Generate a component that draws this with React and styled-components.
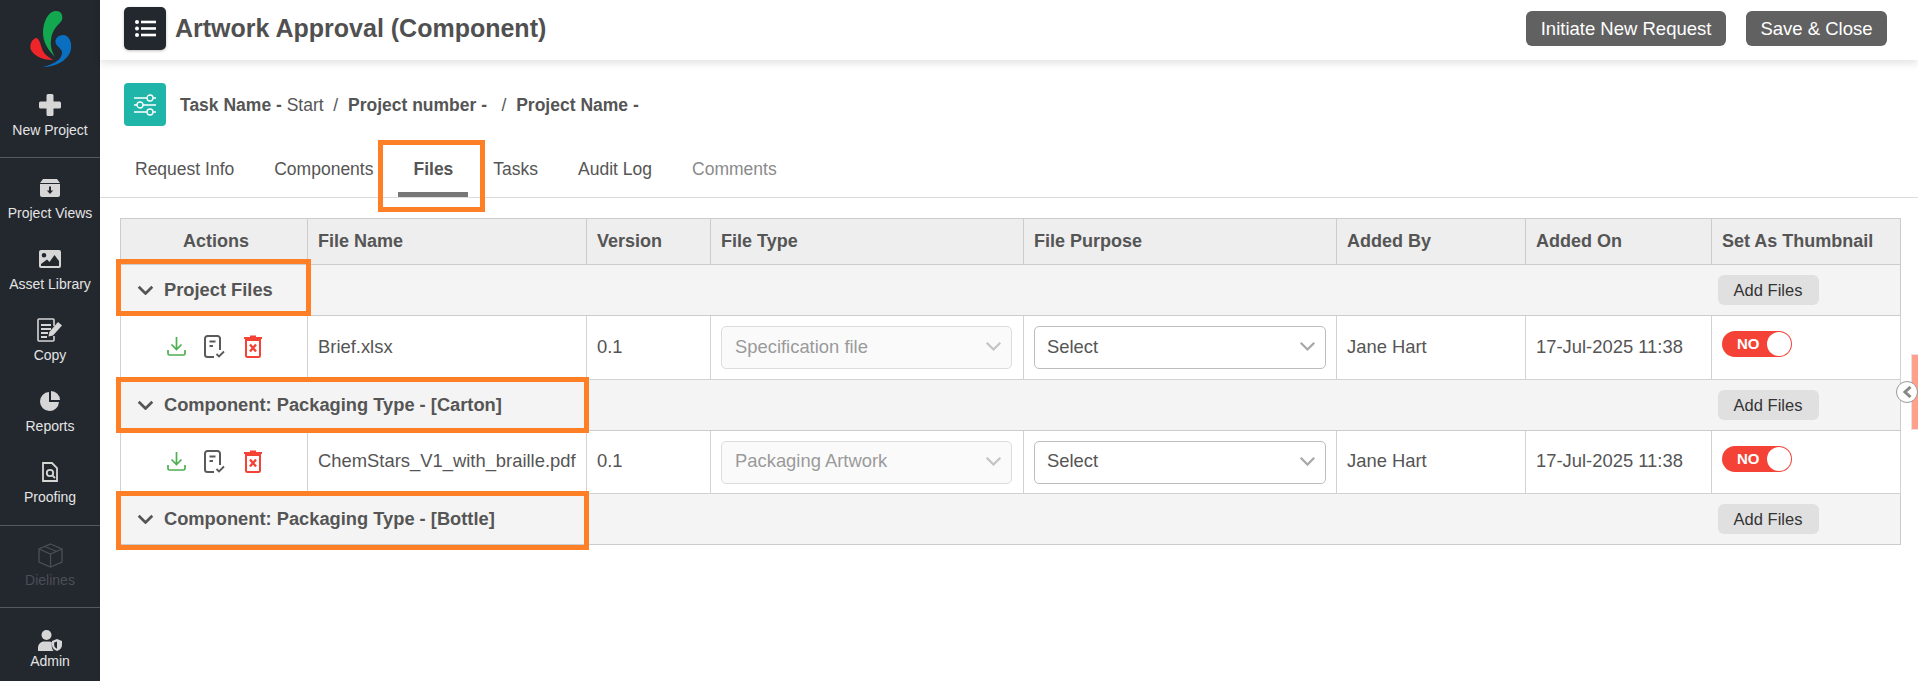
import React from 'react'
import styled, { createGlobalStyle } from 'styled-components'

const GlobalStyle = createGlobalStyle`
    html, body { margin: 0; padding: 0; background: #fff; overflow: hidden; }
    body { font-family: "Liberation Sans", Arial, sans-serif; color: #555; }
    * { box-sizing: border-box; }
`

const Page = styled.div`
    position: relative;
    display: flex;
    width: 1918px;
    height: 681px;
    overflow: hidden;
`

/* SIDEBAR */

const Sidebar = styled.nav`
    width: 100px;
    flex: none;
    background: #23272e;
    display: flex;
    flex-direction: column;
`

const LogoWrap = styled.div`
    height: 92px;
    svg { display: block; }
`

const NavSection = styled.div`
    display: flex;
    flex-direction: column;
    gap: 24px;
    padding: ${props => props.top}px 0 ${props => props.bottom}px;
    border-bottom: ${props => props.divider ? '1px solid #55585c' : 'none'};
`

const NavItem = styled.div`
    height: 47px;
    display: flex;
    flex-direction: column;
    align-items: center;
    color: ${props => props.dim ? '#4b4f55' : '#d6d6d6'};
`

const NavIcon = styled.div`
    height: 26px;
    display: flex;
    align-items: center;
    justify-content: center;
`

const NavLabel = styled.div`
    margin-top: ${props => props.tight ? 0 : 4}px;
    font-size: 14px;
    line-height: 17px;
    white-space: nowrap;
    color: ${props => props.dim ? '#4b4f55' : '#e4e4e4'};
`

/* MAIN */

const Main = styled.main`
    flex: 1;
    min-width: 0;
    display: flex;
    flex-direction: column;
`

const Topbar = styled.header`
    height: 60px;
    flex: none;
    display: flex;
    align-items: center;
    padding: 0 31px 3px 24px;
    background: #fff;
    box-shadow: 0 3px 8px rgba(0, 0, 0, 0.12);
`

const MenuButton = styled.div`
    width: 42px;
    height: 43px;
    border-radius: 5px;
    background: #23272e;
    display: flex;
    align-items: center;
    justify-content: center;
    box-shadow: 0 1px 3px rgba(0, 0, 0, 0.25);
`

const Title = styled.h1`
    margin: 0 0 0 9px;
    font-size: 25px;
    font-weight: 700;
    color: #505050;
`

const TopActions = styled.div`
    margin-left: auto;
    display: flex;
    gap: 20px;
`

const DarkButton = styled.button`
    height: 35px;
    padding: 0 14.5px;
    border: 0;
    border-radius: 6px;
    background: #616161;
    color: #fff;
    font-family: inherit;
    font-size: 18.5px;
`

const TaskBar = styled.div`
    display: flex;
    align-items: center;
    height: 43px;
    margin: 23px 0 0 24px;
`

const TaskIcon = styled.div`
    width: 42px;
    height: 43px;
    border-radius: 4px;
    background: #1fb5a9;
    display: flex;
    align-items: center;
    justify-content: center;
    margin-right: 14px;
`

const Crumb = styled.span`
    margin-top: 2px;
    font-size: 17.5px;
    color: #555;
    white-space: pre;
    font-weight: ${props => props.bold ? 700 : 400};
`

const Tabs = styled.div`
    display: flex;
    height: 49px;
    margin-top: 23px;
    padding-left: 15px;
    border-bottom: 1px solid #dcdcdc;
`

const Tab = styled.div`
    position: relative;
    padding: 0 20px;
    font-size: 17.5px;
    line-height: 40px;
    white-space: nowrap;
    font-weight: ${props => props.active ? 700 : 400};
    color: ${props => props.muted ? '#8a8a8a' : '#555'};
    ${props => props.active && `
        &::after {
            content: "";
            position: absolute;
            left: 50%;
            bottom: 0;
            width: 70px;
            height: 5px;
            margin-left: -35px;
            background: #777;
        }
    `}
`

const Grid = styled.table`
    width: 1780px;
    margin: 20px 0 0 20px;
    border-collapse: collapse;
    table-layout: fixed;
    font-size: 18.4px;
    color: #555;
`

const HeadCell = styled.th`
    height: 46px;
    padding: 0 10px 0 ${props => props.center ? 14 : 10}px;
    background: #eee;
    border: 1px solid #ccc;
    font-size: 18px;
    font-weight: 700;
    white-space: nowrap;
    text-align: ${props => props.center ? 'center' : 'left'};
`

const GroupCell = styled.td`
    height: 51px;
    padding: 0 ${props => props.action ? 6 : 10}px;
    background: #f4f4f4;
    border-top: 1px solid #ccc;
    border-bottom: 1px solid #ccc;
    ${props => props.action ? 'border-right' : 'border-left'}: 1px solid #ccc;
`

const GroupTitle = styled.div`
    display: flex;
    align-items: center;
    gap: 10px;
    padding-left: 6px;
    font-size: 18.3px;
    font-weight: 700;
    white-space: nowrap;
`

const SmallButton = styled.button`
    display: block;
    width: 101px;
    height: 30px;
    padding: 0;
    border: 0;
    border-radius: 6px;
    background: #e0e0e0;
    color: #333;
    font-family: inherit;
    font-size: 16.5px;
`

const Cell = styled.td`
    height: ${props => props.tall}px;
    padding: 0 10px 2px;
    border: 1px solid #d2d2d2;
    white-space: nowrap;
`

const ActionIcons = styled.div`
    display: flex;
    justify-content: center;
    align-items: center;
    gap: 18.5px;
`

const SelectBox = styled.div`
    display: flex;
    align-items: center;
    justify-content: space-between;
    width: ${props => props.wide}px;
    height: 43px;
    margin-top: 2px;
    padding: 0 9px 2px ${props => props.disabled ? 13 : 12}px;
    border-radius: 5px;
    border: 1px solid ${props => props.disabled ? '#dcdcdc' : '#bdbdbd'};
    background: ${props => props.disabled ? '#fafafa' : '#fff'};
    color: ${props => props.disabled ? '#9a9a9a' : '#555'};
`

const Toggle = styled.div`
    position: relative;
    width: 70px;
    height: 26px;
    margin-top: -5px;
    border-radius: 13px;
    background: #f44336;
    color: #fff;
    font-size: 15px;
    font-weight: 700;
    line-height: 26px;
    padding-left: 15px;
    &::after {
        content: "";
        position: absolute;
        top: 1px;
        right: 1px;
        width: 24px;
        height: 24px;
        border-radius: 50%;
        background: #fff;
    }
`

/* annotations and the collapse handle lie over the page */

const Marker = styled.div`
    position: absolute;
    left: ${props => props.x}px;
    top: ${props => props.y}px;
    width: ${props => props.w}px;
    height: ${props => props.h}px;
    border: 5px solid #ff7f27;
    pointer-events: none;
`

const SideTab = styled.div`
    position: absolute;
    right: 0;
    top: 354px;
    width: 7px;
    height: 76px;
    background: #ffa08c;
    border: 1px solid #e4e0de;
    border-right: 0;
`

const CollapseKnob = styled.div`
    position: absolute;
    left: 1896px;
    top: 381px;
    width: 22px;
    height: 22px;
    border-radius: 50%;
    background: #fff;
    border: 1px solid #999;
    display: flex;
    align-items: center;
    justify-content: center;
`

/* DRAWINGS */

const Logo = () => (
    <svg width="100" height="92" viewBox="0 0 100 92">
        <path fill="#12a84f" d="M55 11C62 10 63 16 62 20C60 24 52 28 51 40C50 46 52 52 55 57C48 50 43 42 43 33C43 22 48 12 55 11Z" />
        <path fill="#ee2529" d="M37 38C41 41 41 50 45 54C47 56 50 58 53 60C44 60 35 57 31 50C29 45 32 38 37 38Z" />
        <path fill="#0a6fc0" d="M63 35C69 35 72 42 71 49C69 60 56 67 43 67C50 65 60 62 62 54C63 50 59 48 56 44C54 39 58 35 63 35Z" />
    </svg>
)

const IconPlus = () => (
    <svg width="22" height="22" viewBox="0 0 22 22" fill="currentColor">
        <path d="M9 0h4a1.500 1.500 0 0 1 1.500 1.500V7.500h6A1.500 1.500 0 0 1 22 9v4a1.500 1.500 0 0 1-1.500 1.500h-6v6A1.500 1.500 0 0 1 13 22H9a1.500 1.500 0 0 1-1.500-1.500v-6h-6A1.500 1.500 0 0 1 0 13V9a1.500 1.500 0 0 1 1.500-1.500h6v-6A1.500 1.500 0 0 1 9 0Z" />
    </svg>
)

const IconViews = () => (
    <svg width="20" height="18" viewBox="0 0 20 18" fill="currentColor">
        <path d="M3 0h14l3 4H0Z" />
        <path fillRule="evenodd" d="M0 5h20v11a2 2 0 0 1-2 2H2a2 2 0 0 1-2-2ZM9 7.500v4H6.800l3.200 3.500 3.200-3.500H11v-4Z" />
    </svg>
)

const IconImage = () => (
    <svg width="22" height="18" viewBox="0 0 22 18" fill="currentColor">
        <path fillRule="evenodd" d="M2 0h18a2 2 0 0 1 2 2v14a2 2 0 0 1-2 2H2a2 2 0 0 1-2-2V2a2 2 0 0 1 2-2Zm3 3a2.300 2.300 0 1 0 0 4.600A2.300 2.300 0 0 0 5 3Zm-3 13h18v-5l-4.500-6-5 7-2.500-2.500L2 14Z" />
    </svg>
)

const IconCopy = () => (
    <svg width="26" height="24" viewBox="0 0 26 24" fill="none" stroke="currentColor">
        <path strokeWidth="1.600" d="M17 8V2a1 1 0 0 0-1-1H2a1 1 0 0 0-1 1v20a1 1 0 0 0 1 1h14a1 1 0 0 0 1-1v-4" />
        <path strokeWidth="2" d="M4 7h10M4 11h10M4 15h7M4 19h6" />
        <path fill="currentColor" stroke="none" d="M21 4l4 3.500-9 10-4.500 1 .8-4.600Z" />
    </svg>
)

const IconPie = () => (
    <svg width="20" height="20" viewBox="0 0 20 20" fill="currentColor">
        <path d="M9 1v10h10A9.500 9.500 0 1 1 9 1Z" />
        <path d="M11 0a9 9 0 0 1 9 9h-9Z" />
    </svg>
)

const IconProof = () => (
    <svg width="16" height="20" viewBox="0 0 16 20" fill="none" stroke="currentColor" strokeWidth="1.800">
        <path d="M1 1h9l5 5v13H1Z" />
        <circle cx="8" cy="11" r="3.200" />
        <path d="M10.300 13.300l2.700 2.700" />
    </svg>
)

const IconCube = () => (
    <svg width="25" height="25" viewBox="0 0 25 25" fill="none" stroke="currentColor" strokeWidth="1.300">
        <path d="M12.500 1L24 6v13l-11.500 5L1 19V6Z" />
        <path d="M1 6l11.500 5L24 6M12.500 11v13M7 3.500l11.500 5" />
    </svg>
)

const IconAdmin = () => (
    <svg width="24" height="21" viewBox="0 0 24 21" fill="currentColor">
        <circle cx="8.500" cy="5" r="5" />
        <path d="M0 21v-3c0-4 3-6.500 6-6.500h5c1 0 2 .2 2.800.6V16c0 2 .6 3.700 1.800 5Z" />
        <path fillRule="evenodd" d="M19 9l5 2v4c0 3-2 5-5 6-3-1-5-3-5-6v-4Zm0 2.500L16.200 12.600V15c0 1.800 1.200 3 2.800 3.700Z" />
    </svg>
)

const IconMenu = () => (
    <svg width="21" height="17" viewBox="0 0 21 17" fill="#fff">
        <circle cx="2" cy="2" r="2" /><circle cx="2" cy="8.500" r="2" /><circle cx="2" cy="15" r="2" />
        <rect x="6" y="0.700" width="15" height="2.600" /><rect x="6" y="7.200" width="15" height="2.600" /><rect x="6" y="13.700" width="15" height="2.600" />
    </svg>
)

const IconSliders = () => (
    <svg width="24" height="24" viewBox="0 0 24 24" fill="none" stroke="#fff" strokeWidth="1.300">
        <path d="M1 5h13M20 5h3M1 12h3M10 12h13M1 19h13M20 19h3" />
        <circle cx="17" cy="5" r="3" /><circle cx="7" cy="12" r="3" /><circle cx="17" cy="19" r="3" />
    </svg>
)

const Chevron = ({ size = 17, color = '#555', weight = 2.400 }) => (
    <svg width={size} height={size * 0.6} viewBox="0 0 15 9" fill="none" stroke={color} strokeWidth={weight}>
        <path d="M1.500 1.500L7.500 7.500L13.500 1.500" />
    </svg>
)

const IconBack = () => (
    <svg width="9" height="12" viewBox="0 0 9 12" fill="none" stroke="#888" strokeWidth="3">
        <path d="M7.500 1L2 6l5.500 5" />
    </svg>
)

const IconDownload = () => (
    <svg width="19" height="19" viewBox="0 0 19 19" fill="none" stroke="#4caf50" strokeWidth="1.700">
        <path d="M9.500 0v12M4.500 7.500l5 5 5-5M1 13v3.500a1.500 1.500 0 0 0 1.500 1.500h14a1.500 1.500 0 0 0 1.500-1.500V13" />
    </svg>
)

const IconReview = () => (
    <svg width="21" height="23" viewBox="0 0 21 23" fill="none" stroke="#5a5a5a" strokeWidth="2">
        <path d="M10 22H3.500A2.500 2.500 0 0 1 1 19.500v-16A2.500 2.500 0 0 1 3.500 1h10A2.500 2.500 0 0 1 16 3.500V15" />
        <path d="M5.500 6.500h6M5.500 11h3.500" />
        <path strokeWidth="1.800" d="M12.500 19l2.500 2.500 5-5" />
    </svg>
)

const IconTrash = () => (
    <svg width="18" height="23" viewBox="0 0 18 23" fill="none" stroke="#f44336">
        <path strokeWidth="2" d="M0 3h18M6 1.500h6" />
        <path strokeWidth="2" d="M2 5v15.500A1.500 1.500 0 0 0 3.500 22h11a1.500 1.500 0 0 0 1.500-1.500V5Z" />
        <path strokeWidth="2.400" d="M6 9.500l6 7M12 9.500l-6 7" />
    </svg>
)

const navSections = [
    { top: 0, bottom: 18, divider: true, items: [{ label: 'New Project', icon: <IconPlus /> }] },
    {
        top: 17, bottom: 19, divider: true, items: [
            { label: 'Project Views', icon: <IconViews /> },
            { label: 'Asset Library', icon: <IconImage /> },
            { label: 'Copy', icon: <IconCopy /> },
            { label: 'Reports', icon: <IconPie /> },
            { label: 'Proofing', icon: <IconProof /> },
        ]
    },
    { top: 16, bottom: 18, divider: true, items: [{ label: 'Dielines', icon: <IconCube />, dim: true }] },
    { top: 19, bottom: 0, items: [{ label: 'Admin', icon: <IconAdmin />, tight: true }] },
]

const columns = [187, 279, 124, 313, 313, 189, 186, 189]
const headers = ['File Name', 'Version', 'File Type', 'File Purpose', 'Added By', 'Added On', 'Set As Thumbnail']

const groups = [
    { title: 'Project Files', file: { name: 'Brief.xlsx', type: 'Specification file', tall: 64 } },
    { title: 'Component: Packaging Type - [Carton]', file: { name: 'ChemStars_V1_with_braille.pdf', type: 'Packaging Artwork', tall: 63 } },
    { title: 'Component: Packaging Type - [Bottle]' },
]

const tabs = ['Request Info', 'Components', 'Files', 'Tasks', 'Audit Log', 'Comments']

const FileRow = ({ file }) => (
    <tr>
        <Cell tall={file.tall}>
            <ActionIcons><IconDownload /><IconReview /><IconTrash /></ActionIcons>
        </Cell>
        <Cell tall={file.tall}>{file.name}</Cell>
        <Cell tall={file.tall}>0.1</Cell>
        <Cell tall={file.tall}>
            <SelectBox disabled wide={291}>{file.type}<Chevron color="#c4c4c4" weight={2} /></SelectBox>
        </Cell>
        <Cell tall={file.tall}>
            <SelectBox wide={292}>Select<Chevron color="#a8a8a8" weight={2} /></SelectBox>
        </Cell>
        <Cell tall={file.tall}>Jane Hart</Cell>
        <Cell tall={file.tall}>17-Jul-2025 11:38</Cell>
        <Cell tall={file.tall}><Toggle>NO</Toggle></Cell>
    </tr>
)

export default function App() {
    return (
        <Page>
            <GlobalStyle />

            <Sidebar>
                <LogoWrap><Logo /></LogoWrap>
                {navSections.map((section, index) => (
                    <NavSection key={index} top={section.top} bottom={section.bottom} divider={section.divider}>
                        {section.items.map(item => (
                            <NavItem key={item.label} dim={item.dim}>
                                <NavIcon>{item.icon}</NavIcon>
                                <NavLabel dim={item.dim} tight={item.tight}>{item.label}</NavLabel>
                            </NavItem>
                        ))}
                    </NavSection>
                ))}
            </Sidebar>

            <Main>
                <Topbar>
                    <MenuButton><IconMenu /></MenuButton>
                    <Title>Artwork Approval (Component)</Title>
                    <TopActions>
                        <DarkButton>Initiate New Request</DarkButton>
                        <DarkButton>Save &amp; Close</DarkButton>
                    </TopActions>
                </Topbar>

                <TaskBar>
                    <TaskIcon><IconSliders /></TaskIcon>
                    <Crumb bold>Task Name - </Crumb>
                    <Crumb>Start  /  </Crumb>
                    <Crumb bold>Project number -   </Crumb>
                    <Crumb>/  </Crumb>
                    <Crumb bold>Project Name -</Crumb>
                </TaskBar>

                <Tabs>
                    {tabs.map(tab => (
                        <Tab key={tab} active={tab === 'Files'} muted={tab === 'Comments'}>{tab}</Tab>
                    ))}
                </Tabs>

                <Grid>
                    <colgroup>
                        {columns.map((width, index) => <col key={index} width={width} />)}
                    </colgroup>
                    <thead>
                        <tr>
                            <HeadCell center>Actions</HeadCell>
                            {headers.map(header => <HeadCell key={header}>{header}</HeadCell>)}
                        </tr>
                    </thead>
                    <tbody>
                        {groups.map(group => (
                            <React.Fragment key={group.title}>
                                <tr>
                                    <GroupCell colSpan={7}>
                                        <GroupTitle><Chevron />{group.title}</GroupTitle>
                                    </GroupCell>
                                    <GroupCell action><SmallButton>Add Files</SmallButton></GroupCell>
                                </tr>
                                {group.file && <FileRow file={group.file} />}
                            </React.Fragment>
                        ))}
                    </tbody>
                </Grid>
            </Main>

            <SideTab />
            <CollapseKnob><IconBack /></CollapseKnob>

            <Marker x={378} y={140} w={107} h={72} />
            <Marker x={116} y={259} w={195} h={57} />
            <Marker x={116} y={377} w={473} h={56} />
            <Marker x={116} y={491} w={473} h={59} />
        </Page>
    )
}
